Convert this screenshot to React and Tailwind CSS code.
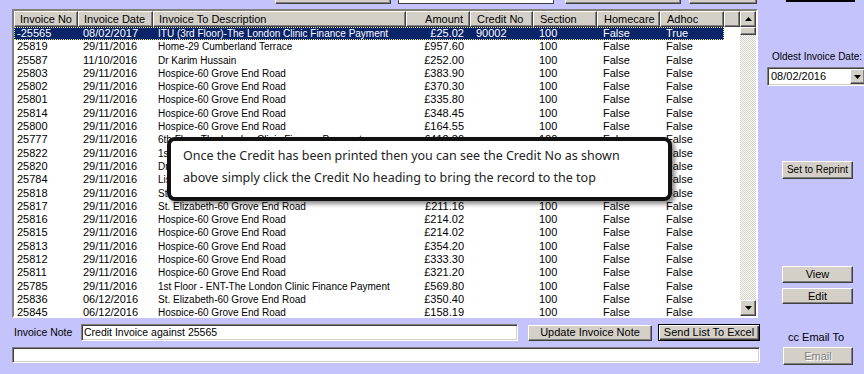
import React from "react";

const raised =
  "bg-[#d4d0c8] border border-t-white border-l-white border-r-[#404040] border-b-[#404040] shadow-[inset_-1px_-1px_#808080]";
const sunken =
  "bg-white border border-t-[#808080] border-l-[#808080] border-r-white border-b-white shadow-[inset_1px_1px_#404040,inset_-1px_-1px_#d4d0c8]";

const cols = [
  { name: "Invoice No", w: "w-[64px]", pad: "pl-[3px]", hpad: "pl-[5px]" },
  { name: "Invoice Date", w: "w-[75px]", pad: "pl-[5px]", hpad: "pl-[5px]" },
  { name: "Invoice To Description", w: "w-[253px]", pad: "pl-[5px] text-[10px]", hpad: "pl-[5px]" },
  { name: "Amount", w: "w-[64px]", pad: "pr-[6px] text-right", hpad: "pr-[6px] text-right" },
  { name: "Credit No", w: "w-[63px]", pad: "pl-[6px]", hpad: "pl-[6px]" },
  { name: "Section", w: "w-[64px]", pad: "pl-[6px]", hpad: "pl-[6px]" },
  { name: "Homecare", w: "w-[63px]", pad: "pl-[6px]", hpad: "pl-[6px]" },
  { name: "Adhoc", w: "w-[64px]", pad: "pl-[6px]", hpad: "pl-[6px]" },
];

const H = "Hospice-60 Grove End Road";
const rows = [
  ["-25565", "08/02/2017", "ITU (3rd Floor)-The London Clinic Finance Payment", "£25.02", "90002", "100", "False", "True"],
  ["25819", "29/11/2016", "Home-29 Cumberland Terrace", "£957.60"],
  ["25587", "11/10/2016", "Dr Karim Hussain", "£252.00"],
  ["25803", "29/11/2016", H, "£383.90"],
  ["25802", "29/11/2016", H, "£370.30"],
  ["25801", "29/11/2016", H, "£335.80"],
  ["25814", "29/11/2016", H, "£348.45"],
  ["25800", "29/11/2016", H, "£164.55"],
  ["25777", "29/11/2016", "6th Floor-The London Clinic Finance Payment", "£412.30"],
  ["25822", "29/11/2016", "1st Floor - ENT-The London Clinic Finance Payment", "£289.60"],
  ["25820", "29/11/2016", "Dr Karim Hussain", "£252.00"],
  ["25784", "29/11/2016", "Lister-60 Grove End Road", "£198.40"],
  ["25818", "29/11/2016", "St. Elizabeth-60 Grove End Road", "£226.14"],
  ["25817", "29/11/2016", "St. Elizabeth-60 Grove End Road", "£211.16"],
  ["25816", "29/11/2016", H, "£214.02"],
  ["25815", "29/11/2016", H, "£214.02"],
  ["25813", "29/11/2016", H, "£354.20"],
  ["25812", "29/11/2016", H, "£333.30"],
  ["25811", "29/11/2016", H, "£321.20"],
  ["25785", "29/11/2016", "1st Floor - ENT-The London Clinic Finance Payment", "£569.80"],
  ["25836", "06/12/2016", "St. Elizabeth-60 Grove End Road", "£350.40"],
  ["25845", "06/12/2016", H, "£158.19"],
].map((r) => (r.length > 4 ? r : [...r, "", "100", "False", "False"]));

const Arrow = ({ down }) => (
  <svg width="7" height="4" viewBox="0 0 7 4">
    <polygon points={down ? "0,0 7,0 3.5,4" : "0,4 7,4 3.5,0"} fill="#000" />
  </svg>
);

const Btn = ({ children, className = "" }) => (
  <div className={`${raised} flex items-center justify-center leading-none whitespace-nowrap ${className}`}>{children}</div>
);

export default function App() {
  return (
    <div className="relative w-[864px] h-[374px] overflow-hidden bg-[#c5c3fb] font-['Liberation_Sans',Arial,sans-serif] text-[11px] text-black">
      {/* top strip, mostly cut off */}
      <div className="flex items-end h-[4px] overflow-hidden">
        <div className={`${raised} ml-[275px] w-[116px] h-[20px] shrink-0`} />
        <div className="ml-[7px] w-[156px] h-[20px] shrink-0 bg-white border border-[#404040]" />
        <div className={`${raised} ml-[11px] w-[116px] h-[20px] shrink-0`} />
        <div className={`${raised} ml-[8px] w-[68px] h-[20px] shrink-0`} />
        <div className="ml-[29px] w-[69px] h-[20px] shrink-0 bg-black self-start mt-[-18px]" />
      </div>

      <div className="flex mt-[5px]">
        {/* left column */}
        <div className="ml-[12px] w-[748px] flex flex-col">
          {/* grid */}
          <div className="w-[746px] h-[309px] flex border-2 border-t-[#808080] border-l-[#808080] border-r-white border-b-white bg-white overflow-hidden">
            <div className="w-[726px] flex flex-col">
              <div className="flex h-[16px] shrink-0">
                {cols.map((c) => (
                  <div
                    key={c.name}
                    className={`${raised} ${c.w} ${c.hpad} shrink-0 leading-[14px] whitespace-nowrap overflow-hidden`}
                  >
                    {c.name}
                  </div>
                ))}
                <div className={`${raised} w-[16px] shrink-0`} />
              </div>
              {rows.map((r, i) => {
                const sel = i === 0;
                return (
                  <div
                    key={i}
                    className={`flex h-[13.3px] leading-[13px] shrink-0 w-[710px] ${
                      sel ? "bg-[#0a246a] text-white outline outline-1 outline-dotted outline-offset-[-1px] outline-[#e8e890]" : ""
                    }`}
                  >
                    {cols.map((c, j) => (
                      <div key={j} className={`${c.w} ${c.pad} shrink-0 whitespace-nowrap overflow-hidden`}>
                        {r[j]}
                      </div>
                    ))}
                  </div>
                );
              })}
            </div>
            {/* scrollbar */}
            <div className="w-[16px] flex flex-col bg-[repeating-conic-gradient(#d4d0c8_0%_25%,#ffffff_0%_50%)] bg-[length:2px_2px]">
              <Btn className="h-[16px] shrink-0">
                <Arrow />
              </Btn>
              <div className={`${raised} h-[8px] shrink-0`} />
              <div className="flex-1" />
              <Btn className="h-[16px] shrink-0">
                <Arrow down />
              </Btn>
            </div>
          </div>

          {/* invoice note row */}
          <div className="flex items-center mt-[6px] h-[17px]">
            <div className="ml-[2px] w-[67px] shrink-0 text-[10.5px]">Invoice Note</div>
            <div className={`${sunken} w-[437px] h-[17px] shrink-0 pl-[2px] leading-[14px] text-[10.5px]`}>
              Credit Invoice against 25565
            </div>
            <Btn className="ml-[10px] w-[124px] h-[16px] shrink-0">Update Invoice Note</Btn>
            <div className="ml-[6px] w-[102px] h-[17px] shrink-0 bg-[#d4d0c8] border border-black shadow-[inset_1px_1px_#fff,inset_-1px_-1px_#404040,inset_-2px_-2px_#808080] flex items-center justify-center leading-none whitespace-nowrap">
              Send List To Excel
            </div>
          </div>
          <div className={`${sunken} mt-[6px] w-[748px] h-[16px]`} />
        </div>

        {/* right column */}
        <div className="ml-[7px] flex flex-col w-[97px]">
          <div className="mt-[41px] ml-[5px] h-[13px] leading-[13px] whitespace-nowrap text-[10px]">Oldest Invoice Date:</div>
          <div className={`${sunken} mt-[4px] w-[101px] h-[19px] shrink-0 flex items-center`}>
            <div className="flex-1 pl-[3px]">08/02/2016</div>
            <Btn className="w-[15px] h-[15px] mr-[2px] shrink-0">
              <Arrow down />
            </Btn>
          </div>
          <Btn className="mt-[75px] ml-[15px] w-[71px] h-[18px] text-[10px]">Set to Reprint</Btn>
          <Btn className="mt-[87px] ml-[15px] w-[71px] h-[17px]">View</Btn>
          <Btn className="mt-[5px] ml-[15px] w-[71px] h-[16px]">Edit</Btn>
          <div className="mt-[27px] ml-[21px] h-[13px] leading-[13px] whitespace-nowrap">cc Email To</div>
          <Btn className="mt-[3px] ml-[16px] w-[70px] h-[18px] text-[#808080] [text-shadow:1px_1px_#fff]">Email</Btn>
        </div>
      </div>

      {/* callout */}
      <div className="absolute left-[167px] top-[137px] w-[505px] h-[64px] bg-white border-[4px] border-[#111] rounded-[8px] shadow-[3px_3px_4px_rgba(0,0,0,0.45)] pl-[12px] pt-[4px] font-['Noto_Sans',sans-serif] text-[12.5px] leading-[22px] text-[#222]">
        <div>Once the Credit has been printed then you can see the Credit No as shown</div>
        <div>above simply click the Credit No heading to bring the record to the top</div>
      </div>
    </div>
  );
}
